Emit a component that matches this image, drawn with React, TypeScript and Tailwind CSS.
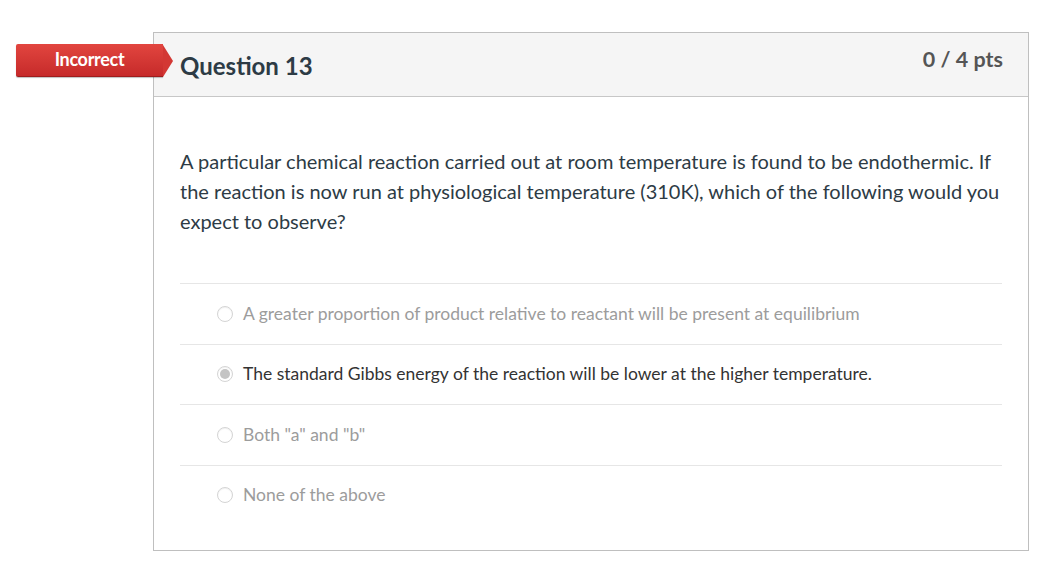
const answers = [
  { text: 'A greater proportion of product relative to reactant will be present at equilibrium', selected: false },
  { text: 'The standard Gibbs energy of the reaction will be lower at the higher temperature.', selected: true },
  { text: 'Both "a" and "b"', selected: false },
  { text: 'None of the above', selected: false },
]

function Radio({ selected }: { selected: boolean }) {
  return (
    <span className="w-[16px] h-[16px] rounded-full border border-[#d4d4d4] bg-white flex items-center justify-center shrink-0 shadow-[inset_0_1px_1px_rgba(0,0,0,0.06)]">
      {selected && <span className="w-[10px] h-[10px] rounded-full bg-[#c4c4c4]" />}
    </span>
  )
}

export default function App() {
  return (
    <div className="min-h-screen bg-white pt-[32px] pl-[153px] font-['Lato','Noto_Sans',sans-serif]">
      <div className="relative w-[876px] h-[519px] border border-[#bfbfbf] bg-white">
        {/* result badge */}
        <div className="absolute left-[-138px] top-[11px] flex items-center">
          <div className="w-[147px] h-[33px] bg-gradient-to-b from-[#e2453f] to-[#c62a2a] border-b border-[#9e1d1d] rounded-l-[2px] flex items-center justify-center shadow-[0_1px_1px_rgba(0,0,0,0.25)]">
            <span className="text-white text-[18px] font-bold tracking-[-0.3px] pb-[1px]">Incorrect</span>
          </div>
          <div className="w-0 h-0 border-t-[16.5px] border-b-[16.5px] border-l-[10px] border-t-transparent border-b-transparent border-l-[#d33834]" />
        </div>

        <div className="h-[64px] bg-[#f5f5f5] border-b border-[#c7c7c7] flex justify-between pl-[26px] pr-[25px]">
          <h2 className="pt-[16px] text-[24px] leading-[34px] font-bold text-[#2d3b45]">Question 13</h2>
          <span className="pt-[11px] text-[21.5px] leading-[30px] font-bold text-[#555]">0 / 4 pts</span>
        </div>

        <div className="px-[26px] pt-[49px]">
          <p className="text-[20px] leading-[30px] text-[#2d3b45]">
            A particular chemical reaction carried out at room temperature is found to be endothermic. If the reaction is now run at physiological temperature (310K), which of the following would you expect to observe?
          </p>
          <div className="mt-[47px]">
            {answers.map((a) => (
              <div key={a.text} className="h-[60.5px] border-t border-[#e6e6e6] flex items-center pl-[37px] gap-[10px]">
                <Radio selected={a.selected} />
                <span className={`text-[17.5px] ${a.selected ? 'text-[#333]' : 'text-[#9c9c9c]'}`}>{a.text}</span>
              </div>
            ))}
          </div>
        </div>
      </div>
    </div>
  )
}
